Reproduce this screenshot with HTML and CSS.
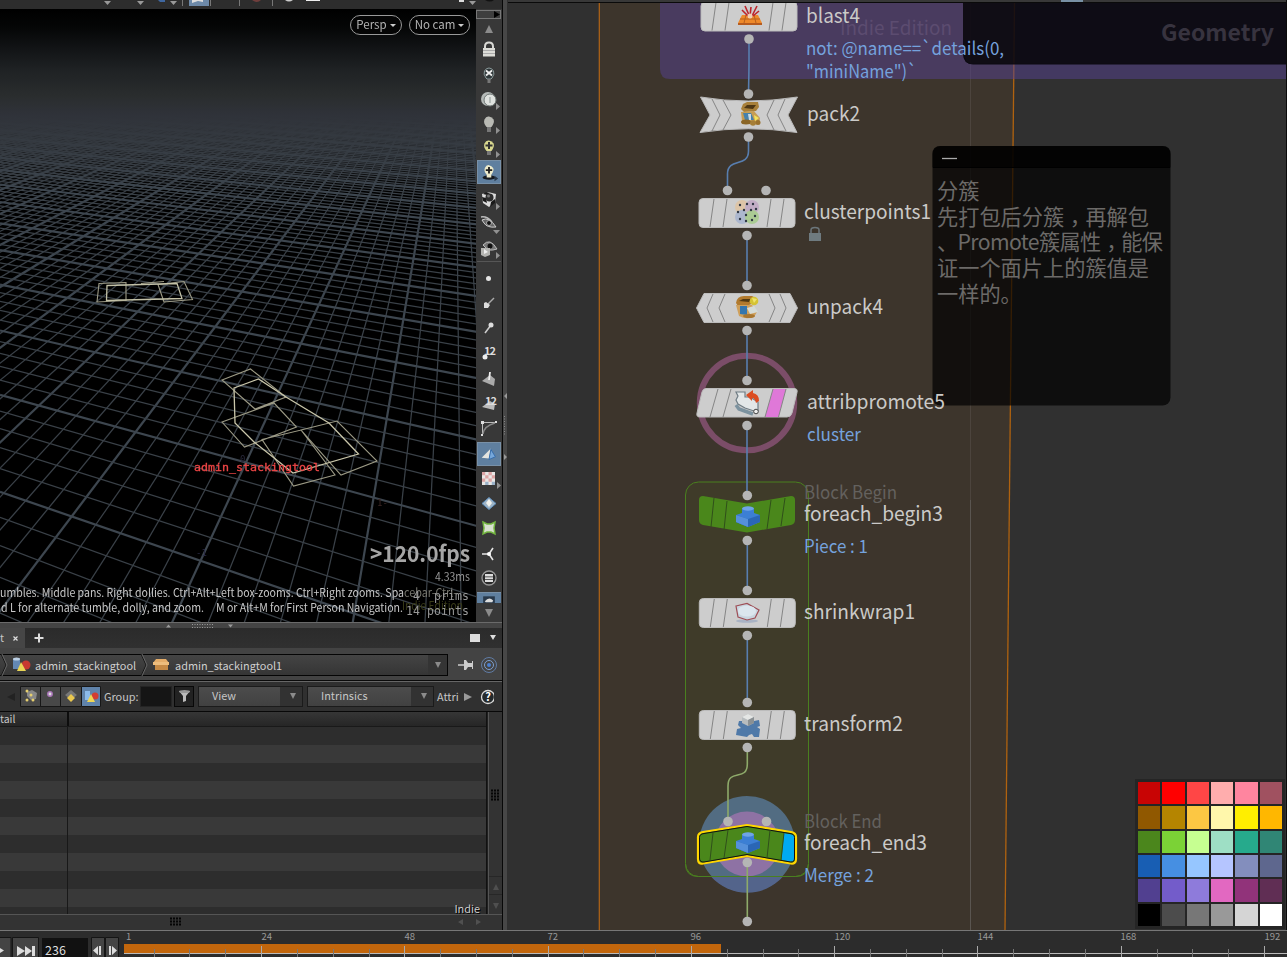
FILE: index.html
```html
<!DOCTYPE html>
<html lang="en">
<head>
<meta charset="utf-8">
<title>Geometry network</title>
<link rel="stylesheet" href="styles.css">
</head>
<body>
<div class="app">
<div class="workspace">
<div class="left">
  <div class="shelf"><svg width="502" height="9">
    <rect width="502" height="9" fill="#2d2d2d"/>
    <g fill="#999"><path d="M104 1h7l-3.500 4zM137 1h7l-3.500 4zM170 1h7l-3.500 4zM469 1h7l-3.500 4z"/></g>
    <path d="M101 0h2M158 0h7v2h-5z" fill="#3f67a0"/>
    <rect x="189" width="20" height="6" fill="#6d89a8"/><path d="M192 0v3l6-2 5 1v-2" fill="#ddd"/>
    <path d="M182.500 0v6M210.500 0v6M239.500 0v6M272.500 0v6" stroke="#777"/>
    <path d="M252 0h9q-4 4-9 0" fill="#703e3c"/><path d="M285 0h8q-4 3-8 0" fill="#ccc"/><rect x="306" width="14" height="1" fill="#eee"/><rect x="459" width="5" height="2" fill="#ddd"/><path d="M485 0h9q-4 3-9 0" fill="#111"/>
  </svg></div>
  <div class="view">
    <div class="scene">
      <canvas class="ground" id="ground" width="477" height="613"></canvas>
      <svg class="overlay" width="477" height="613" viewBox="0 9 477 613">
        <g fill="none" stroke="#9c9a85" stroke-width="1.100">
          <path d="M99 283.500L126 282.500 126 300.500 97 302zM158 284.500L184 281.500 192.500 299.500 164 302zM158 284.500l6 17.500M141 283.500l23-2"/>
          <path d="M107 285.500L177 283.500 182 298.500 106.500 300.500z" stroke="#c2c0a6" stroke-width="1.300"/>
          <path d="M222 380L250.500 369 286 397 255 409zM222 422L274 403 296.500 427 244.500 447zM262 439.500L301 430 335 475 293.500 486zM301 430L337 421 377 461 341 475z"/>
          <path d="M234 388L258.500 379 286 397 329 423 358.500 454 293 473 254 442 235 423z" stroke="#c9c6aa" stroke-width="1.300"/>
        </g>
        <g class="mono"><text x="194" y="471" fill="#ee4646" font-size="10.500" textLength="126" lengthAdjust="spacingAndGlyphs" stroke="#ee4646" stroke-width=".3">admin_stackingtool</text>
        <text x="240" y="462" fill="#29293c" font-size="9">0</text><text x="377" y="506" fill="#3b2724" font-size="9">1-</text><text x="196" y="556" fill="#292943" font-size="9">-1</text></g>
        <g fill="#c8c8c8" font-size="11.500">
          <text x="0" y="596.500" textLength="404" lengthAdjust="spacingAndGlyphs">umbles. Middle pans. Right dollies. Ctrl+Alt+Left box-zooms. Ctrl+Right zooms. Spa</text>
          <text x="404" y="596.500" fill="#77776f" textLength="53" lengthAdjust="spacingAndGlyphs">cebar-Ctrl-</text>
          <text x="1" y="611.500" textLength="203" lengthAdjust="spacingAndGlyphs">d L for alternate tumble, dolly, and zoom.</text>
          <text x="216" y="611.500" textLength="187" lengthAdjust="spacingAndGlyphs">M or Alt+M for First Person Navigation.</text>
          <text x="402" y="610" fill="#393b18" textLength="61" lengthAdjust="spacingAndGlyphs">Indie Edition</text>
        </g>
        <text x="370" y="562" font-size="22" font-weight="bold" fill="#a5a5a5" textLength="100" lengthAdjust="spacingAndGlyphs">&gt;120.0fps</text>
        <text x="435" y="581" font-size="11.500" fill="#969696" textLength="35" lengthAdjust="spacingAndGlyphs">4.33ms</text>
        <g class="mono" fill="#989898" font-size="11.500"><text x="413" y="600">4</text><text x="434" y="600" textLength="35">prims</text><text x="406" y="615" textLength="63" xml:space="preserve">14 points</text></g>
      </svg>
      <div class="cams"><span class="pill">Persp<i></i></span><span class="pill wide">No cam<i></i></span></div>
    </div>
    <div class="strip">
      <div class="grip"><svg width="26" height="9"><rect x=".5" y=".5" width="24" height="8" fill="#3e3e3e" stroke="#777"/><path d="M18 1l6 3.500L18 8z" fill="#000"/></svg></div>
      <svg class="arrow" viewBox="0 0 24 18"><path d="M8 13l4-8 4 8z" fill="#8b8b8b"/></svg>
      <svg class="tool" viewBox="0 0 24 24"><path d="M8 10V8.500q0-4 4-4t4 4V10" fill="none" stroke="#d9d9d5" stroke-width="2"/><path d="M6 10h12v8.500H6z" fill="#dcdcd7"/><path d="M6 12.500h12M6 15.500h12" stroke="#aaa"/></svg>
      <svg class="tool g1" viewBox="0 0 24 24"><path d="M9 15q-3-4-1.500-7T12 5t4.500 3-1.500 7l-1 1h-4z" fill="#30383a" stroke="#8b9a9a"/><path d="M9 7.500l6 5m0-5l-6 5" stroke="#eee" stroke-width="1.800"/><path d="M10.500 16h3v4h-3z" fill="#777"/></svg>
      <svg class="tool g1" viewBox="0 0 24 24"><circle cx="11" cy="11" r="7" fill="#b5bab8"/><circle cx="13" cy="12" r="6" fill="#dfe2df" stroke="#6f7775"/><path d="M12 9v6h2V9z" fill="#b5bcb9"/><path d="M19 15l4 3.500-4 3.500z" fill="#919191"/></svg>
      <svg class="tool" viewBox="0 0 24 24"><path d="M9.500 15q-3.500-4-2-7.500T12 4.500t4.500 3-2 7.500z" fill="#b9bab4"/><path d="M10 15h4v5h-4z" fill="#777"/><path d="M19 15l4 3.500-4 3.500z" fill="#919191"/></svg>
      <svg class="tool" viewBox="0 0 24 24"><path d="M9.500 15q-3.500-4-2-7.500T12 4.500t4.500 3-2 7.500z" fill="#d9d88f"/><path d="M8.500 9.500h7M12 6v7" stroke="#333" stroke-width="2"/><path d="M10 15h4v4h-4z" fill="#777"/><path d="M19 15l4 3.500-4 3.500z" fill="#919191"/></svg>
      <svg class="tool on" viewBox="0 0 24 24"><ellipse cx="12" cy="18" rx="7" ry="2.500" fill="#161a20"/><path d="M9.500 15q-3.500-4-2-7.500T12 4.500t4.500 3-2 7.500v3h-5z" fill="#eceacb"/><path d="M8.500 10h7M12 6.500v7" stroke="#222" stroke-width="2"/><path d="M18 16l4 3-4 3z" fill="#29384a"/></svg>
      <svg class="tool g4" viewBox="0 0 24 24"><path d="M5 6l6-2 8 2-1 8-6 5-6-4z" fill="#ddd"/><path d="M5 9l4 1 1 5-4-2zM14 14l4-3v4l-5 4zM9 4l4 1-3 2-4-1z" fill="#1a1a1a"/><circle cx="12.500" cy="9.500" r="4" fill="#2e2e2e"/><circle cx="11.500" cy="8" r="1.500" fill="#777"/><path d="M19 15l4 3.500-4 3.500z" fill="#919191"/></svg>
      <svg class="tool" viewBox="0 0 24 24"><path d="M5 8q7-4 14 7-9 1-12-4z" fill="#666" stroke="#ccc"/><circle cx="12" cy="11" r="2.500" fill="#111" stroke="#aaa"/><path d="M4 5q6-1 11 5" fill="none" stroke="#bbb" stroke-width="1.500"/><path d="M16 18h7l-3.500 4z" fill="#919191"/></svg>
      <svg class="tool g1" viewBox="0 0 24 24"><path d="M6 8q7-8 14 4-9 3-12-2z" fill="#777" stroke="#bbb"/><circle cx="13" cy="9" r="2.500" fill="#111"/><path d="M4 11h9v7l-5 2-4-2z" fill="#b4b4b1"/><path d="M7 12l4 3-4 2z" fill="#eee"/><path d="M19 15l4 3.500-4 3.500z" fill="#919191"/></svg>
      <div class="rule"></div>
      <svg class="tool g4" viewBox="0 0 24 24"><circle cx="11.500" cy="12.500" r="2.500" fill="#e5e5e5"/></svg>
      <svg class="tool g1" viewBox="0 0 24 24"><path d="M10 14l7-7" stroke="#aaa" stroke-width="1.500"/><path d="M7 12l2-1 4 3-2 3-4 0z" fill="#ddd"/></svg>
      <svg class="tool g1" viewBox="0 0 24 24"><path d="M8 17l6-8" stroke="#ccc" stroke-width="1.500"/><circle cx="14" cy="9" r="2.500" fill="#ddd"/></svg>
      <svg class="tool g1" viewBox="0 0 24 24"><circle cx="8" cy="16" r="2.500" fill="#eee"/><text x="7" y="14" font-size="11" font-weight="bold" fill="#ddd" textLength="12">12</text></svg>
      <svg class="tool g2" viewBox="0 0 24 24"><path d="M5 14l8-6 5 4-1 7z" fill="#aaa"/><path d="M12 13l1-8" stroke="#eee" stroke-width="1.800"/></svg>
      <svg class="tool" viewBox="0 0 24 24"><path d="M5 16l8-6 5 3-1 6z" fill="#bbb"/><text x="8" y="14" font-size="11" font-weight="bold" fill="#ddd" textLength="12">12</text></svg>
      <svg class="tool g1" viewBox="0 0 24 24"><path d="M5.500 19V6.500h13" fill="none" stroke="#bbb"/><path d="M6 18q1-8 12-11" fill="none" stroke="#888" stroke-width="1.500"/><path d="M4 5h3v3H4zM18 5h2v2h-2zM4 18h2v2H4z" fill="#ddd"/></svg>
      <svg class="tool on g2" viewBox="0 0 24 24"><path d="M4 16l10-10-2 11z" fill="#e4e4df"/><path d="M14 7l5 8-7 3z" fill="#76a7da" stroke="#326aaa"/></svg>
      <svg class="tool g1" viewBox="0 0 24 24"><path d="M5 5h13v13H5z" fill="#e8e7e5"/><path d="M5 5h3.200v3.200H5zM11.500 5h3.300v3.200h-3.300zM8.200 8.200h3.300v3.300H8.200zM14.800 8.200H18v3.300h-3.200zM5 11.500h3.200v3.300H5zM11.500 11.500h3.300v3.300h-3.300z" fill="#dda5a5"/><path d="M8.200 14.800h3.300V18H8.200zM14.800 14.800H18V18h-3.200z" fill="#9bb2c9"/><path d="M20 15l4 3.500-4 3.500z" fill="#919191"/></svg>
      <svg class="tool g1" viewBox="0 0 24 24"><path d="M12 5.500l7 6-7 6-7-6z" fill="#9eb4c6" stroke="#5d8ebe"/><path d="M9 11l3-4 3 4-3 4z" fill="#f1f1ec"/></svg>
      <svg class="tool" viewBox="0 0 24 24"><path d="M6 6l4 2h4l4-2-1 6 1 6-4-2h-4l-4 2 1-6z" fill="#d8e0d0" stroke="#73b540" stroke-width="1.500"/></svg>
      <svg class="tool g2" viewBox="0 0 24 24"><path d="M5 12h7l4-6M12 12l4 6" fill="none" stroke="#e5e5e5" stroke-width="1.600"/><circle cx="12" cy="12" r="2" fill="#fff"/></svg>
      <svg class="tool g1" viewBox="0 0 24 24"><circle cx="12" cy="11" r="7" fill="#292929" stroke="#999" stroke-width="1.300"/><path d="M8 7h8v2.500H8zM8 10.300h8v2H8zM8 13h8v2H8z" fill="#ddd"/></svg>
      <svg class="tool cut g1" viewBox="0 0 24 12"><rect x="5" y="4" width="14" height="8" fill="#28384a"/><path d="M7 10q5-6 10-1l-1 2H8z" fill="#ddd"/></svg>
      <svg class="arrow" viewBox="0 0 24 18"><path d="M8 6h8l-4 8z" fill="#8b8b8b"/></svg>
    </div>
  </div>
  <div class="split"><svg width="503" height="6"><path d="M166 4.500l2.500-3 2.500 3zM228 1.500h5l-2.500 3z" fill="#999"/><path d="M192 1.500h21M192 4.500h21" stroke="#999" stroke-dasharray="1 1.500"/></svg></div>
  <div class="tabs"><div class="tab">t<svg width="5" height="20"><path d="M.5 8.500l4 4m0-4l-4 4" stroke="#ddd" stroke-width="1.200"/></svg></div><svg class="plus" width="10" height="10"><path d="M5 .5v9M.5 5h9" stroke="#ddd" stroke-width="2"/></svg><svg class="tabmenu" width="27" height="10"><rect y="1" width="10" height="8" fill="#ddd"/><path d="M20 2h6l-3 5z" fill="#ddd"/></svg></div>
  <div class="pathbar">
    <div class="path">
      <svg width="33" height="22"><path d="M1 0l5 11-5 11" fill="none" stroke="#161616"/><path d="M2 0l5 11-5 11" fill="none" stroke="#666"/><path d="M13 5h7v10h-7z" fill="#6388b4"/><ellipse cx="16.500" cy="5" rx="3.500" ry="1.500" fill="#bcd0e5"/><circle cx="26" cy="11" r="4.500" fill="#c73930"/><path d="M21 8l5 9h-9z" fill="#e9d555"/></svg>
      <span class="crumb one">admin_stackingtool</span>
      <svg width="40" height="22"><path d="M6 0l5 11-5 11" fill="none" stroke="#161616"/><path d="M7 0l5 11-5 11" fill="none" stroke="#666"/><path d="M18 9l3-4h10l3 4z" fill="#e5ad69"/><path d="M20 9h13v7H20z" fill="#c58a46"/><path d="M18 8h16v3H18z" fill="#edbd7d"/></svg>
      <span class="crumb two">admin_stackingtool1</span>
      <span class="drop"></span>
    </div>
    <svg width="44" height="22"><path d="M0 11h7" stroke="#ccc" stroke-width="1.500"/><path d="M6 6h2l2 3h4V7h1v8h-1v-2h-4l-2 3H6z" fill="#ccc"/><circle cx="31" cy="11" r="7.500" fill="none" stroke="#607ca5"/><circle cx="31" cy="11" r="4.500" fill="none" stroke="#7fa0cf"/><circle cx="31" cy="11" r="2" fill="#4a7fd0"/></svg>
  </div>
  <div class="filters">
    <svg width="101" height="22"><path d="M15 7v8l-8-4z" fill="#222"/><g fill="#484848" stroke="#171717"><path d="M20.500.5h20v20h-20zM40.500.5h20v20h-20zM60.500.5h21v20h-21z"/><path d="M81.500.5h19v20h-19z" fill="#6083aa"/></g><path d="M27 6l5-2 5 3-1 6-5 1-4-4z" fill="#888"/><g fill="#e6cf6f"><circle cx="27" cy="5" r="1.500"/><circle cx="31" cy="9" r="1.500"/><circle cx="27" cy="14" r="1.500"/><circle cx="33" cy="14" r="1.500"/></g><circle cx="50" cy="8" r="2.200" fill="#ddd" stroke="#aa76b9" stroke-width="1.500"/><path d="M71 4l6 5-6 5-6-5z" fill="#777"/><path d="M71 8l4 4-4 4-4-4z" fill="#e9c74f"/><path d="M85 5h5v9h-5z" fill="#8cbbea"/><circle cx="95" cy="10" r="3.500" fill="#d33c31"/><path d="M91 8l4 8h-8z" fill="#efd655"/></svg>
    <span class="group">Group:</span><span class="field"></span>
    <svg class="funnel" width="20" height="22"><rect x=".5" y=".5" width="19" height="20" fill="#222" stroke="#080808"/><path d="M5 5h11l-4 5v5l-3 1v-6z" fill="#bbb"/><ellipse cx="10.500" cy="5.500" rx="5.500" ry="1.500" fill="#999"/></svg>
    <span class="combo a">View</span><span class="combo b">Intrinsics</span><span class="attri">Attri</span>
    <svg width="34" height="22"><path d="M4 7l8 4-8 4z" fill="#999"/><circle cx="28" cy="11" r="6.500" fill="#252a2c" stroke="#ddd" stroke-width="1.300"/><text x="25.300" y="15" font-size="11" font-weight="bold" fill="#fff">?</text></svg>
  </div>
  <div class="sheet"><div class="table"><div class="head">tail</div><div class="rows"><span>Indie</span></div></div><div class="vscroll"><svg width="14" height="200"><path d="M2 78.500h9M2 81.500h9M2 84.500h9M2 87.500h9" stroke="#050505" stroke-width="2" stroke-dasharray="2 1"/><path d="M0 164.500h14M0 182.500h14" stroke="#272727"/><path d="M4 178l3-6 3 6zM4 191h6l-3 6z" fill="#4f4f4f"/></svg></div></div>
  <div class="hscroll"><svg width="502" height="16"><path d="M170 3.500h12M170 6.500h12M170 9.500h12" stroke="#050505" stroke-width="2" stroke-dasharray="2 1"/><path d="M463 4v6l-5-3zM476 4v6l5-3z" fill="#505050"/></svg></div>
</div>
<div class="vsplit"><svg width="6" height="930"><path d="M4 393v6l-3-3zM1 454v6l3-3z" fill="#999"/><path d="M1.500 416v20M4.500 416v20" stroke="#888" stroke-dasharray="1 1.500"/></svg></div>
<div class="network">
<svg width="779" height="930" viewBox="508 0 779 930">
  <defs>
    <g id="plate"><rect x="-48" y="-14.500" width="96" height="29" rx="4" fill="#cdcdcd" stroke="#bcbcbc"/><path d="M-33-14l-4 28M-20-14l-4 28M24-14l-4 28M37-14l-4 28" stroke="#858585"/></g>
    <g id="brick"><path d="M-12-1l6-2v-4q6-4 12 0v4l6 2v7L0 11l-12-5z" fill="#3c7fd4"/><path d="M-12-1L0 3l12-4v7L0 11l-12-5z" fill="#2a66b5"/><path d="M-12-1L0 3v8l-12-5z" fill="#5590da"/><ellipse cy="-7.500" rx="6" ry="2.200" fill="#6fa4e6"/></g>
  </defs>
  <rect x="508" width="779" height="930" fill="#303030"/>
  <rect x="508" width="779" height="2" fill="#383838"/><path d="M508 2.500h779" stroke="#0a0a0a"/><rect x="1061" width="22" height="2" fill="#7890a4"/>
  <path d="M599.500 3H1014.500L1005 930H599.500z" fill="#3d352c"/>
  <path d="M599.300 3V930" stroke="#b36517" stroke-width="1.200"/><path d="M1014.500 3L1005 930" stroke="#b0620f" stroke-width="1.300"/>
  <path d="M970.500 3V500" stroke="#4c443d"/><path d="M970.500 500V930" stroke="#5a5550"/>
  <path d="M660 3H1287V79H670q-10 0-10-10z" fill="#554191" fill-opacity=".5"/>
  <text x="840" y="35" font-size="19" fill="#5c4c70" textLength="112" lengthAdjust="spacingAndGlyphs">Indie Edition</text>
  <rect x="685.500" y="482" width="123" height="394.500" rx="13" fill="#3f3b29" stroke="#4a801f"/>
  <path d="M963 3H1286V64H973q-10 0-10-10z" fill="#000" fill-opacity=".78"/><path d="M964 54q0 10 9 10h313" fill="none" stroke="#0c0a12"/>
  <text x="1161" y="41" font-size="23" font-weight="bold" fill="#37333f" textLength="113" lengthAdjust="spacingAndGlyphs">Geometry</text>
  <rect x="932.500" y="146" width="238" height="259.500" rx="8" fill="#000" fill-opacity=".7"/>
  <path d="M932.500 167.500V154q0-8 8-8h222q8 0 8 8v13.500z" fill="#000" fill-opacity=".72"/><path d="M933 167.500h237" stroke="#000"/><path d="M942 158.500h15" stroke="#aaa" stroke-width="1.300"/>
  <g fill="#6c6a68" font-size="21.200">
    <text x="937" y="199">分簇</text><text x="937" y="224.500" textLength="212">先打包后分簇<tspan class="comma" dy="6">，</tspan><tspan dy="-6">再解包</tspan></text><text x="937" y="249.500" textLength="226">、Promote簇属性<tspan class="comma" dy="6">，</tspan><tspan dy="-6">能保</tspan></text><text x="937" y="275.500" textLength="212">证一个面片上的簇值是</text><text x="937" y="301.500">一样的。</text>
  </g>
  <circle cx="747" cy="403" r="47.200" fill="none" stroke="#7b4d68" stroke-width="6"/>
  <circle cx="747" cy="844" r="48" fill="#526c82"/><path d="M711 876.500a48 48 0 0 0 72 0z" fill="#53648b"/><circle cx="747" cy="844" r="32.500" fill="#8e72a4"/>
  <path d="M685.500 864q0 12.500 13 12.500h97q13 0 13-12.500" fill="none" stroke="#4a801f"/>
  <g fill="none" stroke="#587eaf" stroke-width="1.600">
    <path d="M749 39V66L748.500 94M748.500 137V151C748.500 168 727.500 157 727.500 174V190M747 235V286M747 331V381M747 426V496M747.300 541V591M747.300 635V703"/>
    <path d="M747.300 748V764C747.300 782 728 768 728 786V822M747.300 864V922" stroke="#8eaa6a"/>
  </g>
  <use href="#plate" x="749" y="16.500"/><rect x="690" width="120" height="2" fill="#383838"/><path d="M690 2.500h120" stroke="#0a0a0a"/>
  <path d="M700.500 97Q748 105 797.500 97L788 115 797 132.500Q748 125 700 132.500L710 115z" fill="#cdcdcd" stroke="#b9b9b9"/>
  <path d="M712 99l8 16-8 16M723 100l8 15-8 15M785 99l-7 16 8 16M774 100l-7 15 7 15" fill="none" stroke="#858585"/>
  <use href="#plate" x="747" y="213"/>
  <path d="M704 293.500H790L797.500 308 790 322.500H704L696.500 308z" fill="#cdcdcd" stroke="#bcbcbc"/><path d="M713 294l-6 14 6 14M725 294l-6 14 6 14M769 294l6 14-6 14M780 294l6 14-6 14" fill="none" stroke="#858585"/>
  <path d="M706 388.500H794q4 0 3 4L792 413q-1 4-5 4H700q-4 0-3-4L702 392q1-3.500 4-3.500z" fill="#cdcdcd" stroke="#bcbcbc"/><path d="M773 389H786L778.500 417H765z" fill="#df78d8"/><path d="M718 389l-8 28M731 389l-8 28M773 389l-8 28M786 389l-7.500 28" stroke="#858585"/>
  <path d="M703 496L747 503.500 791 496q4 0 4 4V520q0 4-4 5L747 532.500 703 525q-4-1-4-5V500q0-4 4-4z" fill="#4a871b"/><path d="M714 498l-3 29M727 501l-3 29M771 500l-4 29M785 498l-4 28" stroke="#304f1b"/>
  <use href="#plate" x="747.300" y="613"/><use href="#plate" x="747.300" y="725"/>
  <path d="M703 832L747 825 791 832q5 1 5 5V859q0 5-5 4.500L747 856 703 863.500q-5 1-5-4.500V837q0-4 5-5z" fill="#4a871b" stroke="#ffd600" stroke-width="2.200"/><path d="M784 833l8 1.500q2.500.5 2.500 3V858q0 4-4 3.500l-9-1.500z" fill="#00aaf2"/><path d="M704 833.500L747 826.500 790 833.500q4.500.5 4.500 4V858q0 4.500-4 4L747 854.500 704 862q-4.500.5-4.500-4V837.500q0-3.500 4.500-4z" fill="none" stroke="#111"/><path d="M713 833l-3 27M728 830l-4 28M770 830l-3 28M784 833l-3 27" stroke="#304f1b"/>
  <g fill="#b5b5b5"><circle cx="749" cy="39" r="4.800"/><circle cx="748.500" cy="94" r="4.800"/><circle cx="748.500" cy="137" r="4.800"/><circle cx="727.500" cy="190.500" r="4.800"/><circle cx="766" cy="190.500" r="4.800"/><circle cx="747" cy="235.500" r="4.800"/><circle cx="747" cy="285.500" r="4.800"/><circle cx="747" cy="330.500" r="4.800"/><circle cx="747" cy="380.500" r="4.800"/><circle cx="747" cy="425.500" r="4.800"/><circle cx="747.300" cy="495.500" r="4.800"/><circle cx="747.300" cy="540.500" r="4.800"/><circle cx="747.300" cy="590.500" r="4.800"/><circle cx="747.300" cy="635.500" r="4.800"/><circle cx="747.300" cy="702.500" r="4.800"/><circle cx="747.300" cy="747.500" r="4.800"/><circle cx="728" cy="821.500" r="4.800"/><circle cx="766.500" cy="821.500" r="4.800"/><circle cx="747.300" cy="862.500" r="4.800"/><circle cx="747.300" cy="921.500" r="4.800"/></g>
  <!-- node glyphs -->
  <g transform="translate(750 16)"><path d="M-8-1H8L12 7H-12z" fill="#ee8a2c"/><path d="M-10 3h20M-4-1l-2 8M4-1l2 8" stroke="#b8601f"/><path d="M-12 7h24v2h-24z" fill="#b65c20"/><path d="M-5-10l4 9M1-9L0 0M7-10L2 0M-8-6l6 6M9-5L3 0" stroke="#bd242a" stroke-width="1.600"/><circle r="2.500" fill="#f0d0b5"/></g>
  <g transform="translate(750 114)"><path d="M-9-5l2-5 4-2H8l1 5-3 4-12 1z" fill="#a8803a"/><path d="M-6-6l3-3h9l-3 4z" fill="#4e3714"/><path d="M-9-2l13-1 6 7-1 6-7 1-10-4z" fill="#c69d53"/><path d="M-7-1h8l3 7-9 0z" fill="#4681ab"/><path d="M-2 0h3v6h-2z" fill="#c9dbe4"/><path d="M4 1l5 3-4 3z" fill="#f3e45b"/><ellipse cx="-4" cy="8" rx="5" ry="2.500" fill="#8a6526"/><circle cx="3" cy="9" r="2.800" fill="#a67f38"/><circle cx="8" cy="8.500" r="2.500" fill="#9a712d"/></g>
  <g transform="translate(747 212)"><circle cx="-5" cy="-5" r="7" fill="#ddc5a8"/><circle cx="5" cy="-5" r="7" fill="#c1adc5"/><circle cx="-5" cy="5" r="7" fill="#acb7ce"/><circle cx="5" cy="5" r="7" fill="#abcb94"/><g fill="#303744"><circle cx="-7" cy="-7" r="1.200"/><circle cy="-8" r="1.200"/><circle cx="6" cy="-8" r="1.200"/><circle cx="-3" cy="-2" r="1.200"/><circle cx="4" cy="-2" r="1.200"/><circle cx="9" cy="-3" r="1.200"/><circle cx="-9" r="1.200"/><circle cx="-7" cy="7" r="1.200"/><circle cx="-1" cy="3" r="1.200"/><circle cx="5" cy="8" r="1.200"/><circle cx="8" cy="4" r="1.200"/><circle cx="-1" cy="9" r="1.200"/></g></g>
  <g transform="translate(747 307)"><path d="M-11-4q1-7 8-7H5q5 2 4 6l-7 3-11 1z" fill="#b27a2d"/><path d="M-8-6l4-2h8L2-5z" fill="#503913"/><path d="M-11-2H5l5 7-3 5q-8 3-15-1z" fill="#cfa05b"/><path d="M-7-1h7v9l-7-1z" fill="#3476ad"/><path d="M0 1l7-2 4 6-8 2z" fill="#d5dcd8"/><circle cx="7" cy="-6" r="4.300" fill="#d5c333"/><path d="M5-9l5 1-3 4z" fill="#efe36d"/><ellipse cx="2" cy="9" rx="6" ry="2" fill="#a9762f"/></g>
  <g transform="translate(747 403)"><path d="M-11-11H-2v5h5l8 5v9H7l-9-3-7-4-2-4 2-4z" fill="#e3e7e8" stroke="#6f7c84" stroke-width="1.200"/><path d="M-11 2l3 4 14 5" fill="none" stroke="#7c929f" stroke-width="3.500"/><circle cx="9" cy="8.500" r="2.300" fill="#eee" stroke="#444"/><path d="M-1-8l7-5v3q6 1 6 8l-3 2q-1-5-4-5v3z" fill="#db4d22"/></g>
  <use href="#brick" x="748" y="516"/><use href="#brick" x="748" y="842"/>
  <g transform="translate(747 612)"><ellipse cy="9" rx="11" ry="1.800" fill="#a9b3c4"/><path d="M-11-6L0-8.500 12-2 8 6 0 8-9 5z" fill="#c8d5df" stroke="#9e4d55" stroke-width="1.200"/><ellipse cy="-1" rx="9" ry="5.500" fill="#dbe6ee"/></g>
  <g transform="translate(748 724)"><path d="M-9-3h5l2 3 3-2 10-2 1 6-3 1 3 2-1 8H6l-2-3-3 1-2 2-11-2 1-6 4-1-3-3z" fill="#4f79a8"/><path d="M-6-7l6-3 6 3v6L0 2l-6-3z" fill="#b7bcbe"/><path d="M-6-7l6-3 6 3-6 3z" fill="#e4e6e5"/><path d="M0-4l6-3v6L0 2z" fill="#8a9093"/></g>
  <g transform="translate(815 234)"><path d="M-4-1v-3q0-2.500 4-2.500T4-4v3" fill="none" stroke="#6c767b" stroke-width="1.500"/><path d="M-6-1H6v8H-6z" fill="#6f7b80"/></g>
  <g fill="#cbcac8" font-size="20.500">
    <text x="806" y="23" textLength="54" lengthAdjust="spacingAndGlyphs">blast4</text><text x="807" y="121" textLength="53" lengthAdjust="spacingAndGlyphs">pack2</text><text x="804" y="219" textLength="127" lengthAdjust="spacingAndGlyphs">clusterpoints1</text><text x="807" y="314" textLength="76" lengthAdjust="spacingAndGlyphs">unpack4</text><text x="807" y="409" textLength="138" lengthAdjust="spacingAndGlyphs">attribpromote5</text><text x="804" y="521" textLength="139" lengthAdjust="spacingAndGlyphs">foreach_begin3</text><text x="804" y="619" textLength="111" lengthAdjust="spacingAndGlyphs">shrinkwrap1</text><text x="804" y="731" textLength="99" lengthAdjust="spacingAndGlyphs">transform2</text><text x="804" y="850" textLength="123" lengthAdjust="spacingAndGlyphs">foreach_end3</text>
  </g>
  <g fill="#75a2dd" font-size="18">
    <text x="806" y="55" textLength="198" lengthAdjust="spacingAndGlyphs">not: @name==`details(0,</text><text x="806" y="78" textLength="111" lengthAdjust="spacingAndGlyphs">"miniName")`</text><text x="807" y="441" textLength="54" lengthAdjust="spacingAndGlyphs">cluster</text><text x="804" y="553" textLength="64" lengthAdjust="spacingAndGlyphs">Piece : 1</text><text x="804" y="882" textLength="70" lengthAdjust="spacingAndGlyphs">Merge : 2</text>
  </g>
  <g fill="#64615e" font-size="18"><text x="804" y="499" textLength="93" lengthAdjust="spacingAndGlyphs">Block Begin</text><text x="804" y="828" textLength="78" lengthAdjust="spacingAndGlyphs">Block End</text></g>
  <path d="M1286.500 0V930" stroke="#0a0a0a"/>
</svg>
<div class="palette" id="palette"></div>
</div>
</div>
<div class="timeline"><div class="transport">
  <svg width="124" height="27"><g fill="#444" stroke="#151515"><path d="M-2 7.500h13V28H-2zM12.500 7.500h26V28h-26zM91.500 7.500h13V28h-13zM105.500 7.500h13V28h-13z"/></g><rect x="42" y="8" width="46" height="20" fill="#111"/><path d="M-3 16l7 4.500-7 4.500zM17 16l8 5-8 5zM25 16l7 5-7 5zM32 16h3v10h-3zM98 16v9l-5-4.500zM99 16h2v9h-2zM109 16h2v9h-2zM112 16l5 4.500-5 4.500z" fill="#ddd"/><text x="45" y="25" font-size="12.500" fill="#ddd" textLength="21">236</text></svg></div>
  <svg class="ticks" id="ticks" width="1163" height="27" viewBox="124 930 1163 27"></svg>
</div>
</div>
<script src="main.js"></script>
</body>
</html>
```

FILE: styles.css
```css
* { box-sizing: border-box; }
body { margin: 0; background: #2d2d2d; overflow: hidden; font-family: "Noto Sans CJK SC", "Noto Sans", sans-serif; font-size: 12px; color: #c6c6c6; }
svg { display: block; flex: none; }
.app { width: 1287px; height: 957px; display: flex; flex-direction: column; }
.workspace { height: 930px; display: flex; }
.left { width: 503px; display: flex; flex-direction: column; border-right: 1px solid #080808; overflow: hidden; }
.shelf { height: 9px; }
.view { height: 613px; display: flex; }
.scene { position: relative; width: 476px; background: #000; overflow: hidden; }
.ground { display: block; }
.overlay { position: absolute; left: 0; top: 0; }
.mono { font-family: "DejaVu Sans Mono", monospace; }
.comma { font-family: "Noto Sans CJK TC", sans-serif; }
.cams { position: absolute; right: 6px; top: 6px; display: flex; gap: 7px; }
.pill { height: 20px; width: 52px; border: 1px solid #999; border-radius: 10px; background: #050505; font-size: 11.5px; line-height: 17px; padding-bottom: 2px; display: flex; align-items: center; justify-content: center; gap: 3px; color: #b4b4b4; white-space: nowrap; }
.pill.wide { width: 61px; }
.pill i { border: 3px solid transparent; border-top-color: #ccc; border-bottom: 0; margin-top: 2px; }
.strip { width: 26px; background: #383838; display: flex; flex-direction: column; align-items: center; overflow: hidden; }
.grip { height: 11px; padding-top: 1px; }
.arrow { width: 24px; height: 18px; }
.tool { width: 24px; height: 24px; }
.on { background: #5f7f9f; border: 1px solid #7890a7; }
.cut { height: 11px; background: #5f7f9f; border-top: 1px solid #7890a7; }
.g1 { margin-top: 1px; }
.g2 { margin-top: 2px; }
.g4 { margin-top: 4px; }
.rule { width: 24px; height: 1px; flex: none; background: #565656; }
.split { height: 6px; background: #444; border-top: 1px solid #6a6a6a; }
.tabs { height: 20px; background: linear-gradient(#2b2b2b, #303030); display: flex; align-items: center; }
.tab { width: 25px; height: 20px; background: #464646; font-size: 10.5px; line-height: 20px; display: flex; gap: 9px; }
.plus { margin-left: 9px; }
.tabmenu { margin-left: auto; margin-right: 5px; }
.pathbar { height: 33px; padding-top: 6px; background: #434343; display: flex; align-items: flex-start; gap: 10px; border-bottom: 1px solid #0a0a0a; }
.path { width: 448px; height: 22px; border: 1px solid #050505; border-left: 0; background: linear-gradient(#444, #353535); display: flex; align-items: center; }
.crumb { font-size: 10.9px; line-height: 20px; white-space: nowrap; color: #d0d0d0; margin-left: 2px; padding-bottom: 1px; }
.one { width: 100px; }
.two { width: 250px; margin-left: 0; }
.drop { margin-left: auto; width: 19px; height: 20px; background: #343434; display: flex; align-items: center; justify-content: center; }
.drop::after, .combo::after { content: ""; border: 3px solid transparent; border-top: 6px solid #8b8b8b; border-bottom: 0; }
.filters { height: 31px; padding-top: 4px; background: #303030; border-top: 1px solid #666; border-bottom: 1px solid #080808; display: flex; align-items: flex-start; }
.group { width: 35px; margin-left: 3px; font-size: 10.9px; line-height: 21px; white-space: nowrap; }
.field { width: 32px; height: 21px; background: #151515; border: 1px solid #242424; margin-left: 1px; }
.funnel { margin-left: 2px; }
.combo { height: 21px; border: 1px solid #1b1b1b; background: linear-gradient(90deg, transparent calc(100% - 22px), #323232 calc(100% - 22px)), linear-gradient(#4c4c4c, #414141); font-size: 10.9px; line-height: 17px; display: flex; align-items: center; justify-content: space-between; padding: 0 6px 2px 13px; }
.a { width: 105px; margin-left: 4px; }
.b { width: 127px; margin-left: 4px; }
.attri { width: 23px; margin-left: 3px; font-size: 10.9px; line-height: 21px; white-space: nowrap; }
.sheet { height: 202px; display: flex; gap: 1px; background: #202020; }
.table { width: 487px; display: flex; flex-direction: column; border-right: 1px solid #111; }
.head { height: 15px; background: linear-gradient(90deg, transparent 67px, #0d0d0d 67px, #0d0d0d 69px, transparent 69px), linear-gradient(#363636, #262626); border-bottom: 1px solid #191919; font-size: 10.5px; line-height: 13px; }
.rows { flex: 1; background: linear-gradient(90deg, transparent 67px, #181818 67px, #181818 68px, transparent 68px), repeating-linear-gradient(#2d2d2d 0 18px, #393939 18px 36px); display: flex; align-items: flex-end; justify-content: flex-end; }
.rows span { font-size: 10.9px; line-height: 12px; padding: 0 6px 0 0; color: #ccc; text-shadow: 1px 1px #000; }
.vscroll { width: 14px; background: #333; border-left: 1px solid #555; }
.hscroll { height: 16px; background: #333; border-top: 1px solid #555; }
.vsplit { width: 5px; background: #474747; overflow: hidden; border-right: 1px solid #303030; }
.network { position: relative; width: 779px; overflow: hidden; }
.palette { position: absolute; left: 627px; top: 779px; width: 150px; height: 150px; padding: 3px; background: #252525; display: grid; grid-template: repeat(6, 1fr) / repeat(6, 1fr); gap: 2px; }
.timeline { height: 27px; background: linear-gradient(#777 1px, #2c2c2c 1px); display: flex; }
.transport { width: 124px; overflow: hidden; }
```

FILE: main.js
```js
const swatches = ["#c80404", "#ff0000", "#ff4646", "#ffadad", "#ff859f", "#a05160", "#905800", "#b58500", "#fcc743", "#fff7ab", "#ffee00", "#ffb700", "#4b861c", "#7bd236", "#c6ff91", "#9edfc5", "#26aa8c", "#308675", "#185eb3", "#468fe2", "#96c6ff", "#b5c5ff", "#838ebd", "#5e678e", "#514090", "#735cca", "#8e7bdb", "#e268c1", "#91337a", "#602e54", "#000000", "#4c4c4c", "#777777", "#999999", "#d5d5d5", "#ffffff"];
document.getElementById("palette").innerHTML = swatches.map(c => `<div style="background:${c}"></div>`).join("");

// Perspective ground plane: two line families, each meeting at its vanishing point.
const ctx = document.getElementById("ground").getContext("2d");
ctx.translate(0, -9);
const horizon = 10;
function line(x1, y1, x2, y2, major) {
  ctx.lineWidth = major ? 2.2 : 1.25;
  ctx.strokeStyle = major ? "#3d464f" : "#3a4148";
  ctx.beginPath();
  ctx.moveTo(x1, y1);
  ctx.lineTo(x2, y2);
  ctx.stroke();
}
for (let i = -20; i < 160; i++) {
  const slope = 0.167 + i * 0.059;
  line(455 - slope * 50, horizon + 50, 455 - slope * 650, horizon + 650, i % 5 === 0);
}
for (let j = -20; j < 150; j++) {
  const w = 0.00245 + j * 0.000082;
  if (w < 0.0006) continue;
  const s = 1 / w / 1783;
  line(0, horizon + s * 1400, 477, horizon + s * 1877, j % 5 === 0);
}
const fog = ctx.createLinearGradient(0, 9, 0, 190);
[[0, "#000"], [0.1, "#050606"], [0.22, "#121416"], [0.34, "#1f2224"], [0.48, "#2a2d2e"], [0.58, "rgba(47,50,57,1)"], [0.72, "rgba(49,53,59,.7)"], [1, "rgba(49,53,59,0)"]].forEach(([t, c]) => fog.addColorStop(t, c));
ctx.fillStyle = fog;
ctx.fillRect(0, 9, 477, 181);

// Frame ruler: one mark every six frames, numbered every 24.
const px = 5.97, zero = 118.3;
let ruler = '<rect x="124" y="944" width="597" height="10" fill="#c2660c"/><path d="M124 953.500H1287" stroke="#bbb"/>';
for (let f = 6; f < 196; f += 6) {
  const x = Math.round(zero + f * px - 0.5) + 0.5, major = f % 24 === 0;
  ruler += `<path d="M${x} ${major ? 946 : 949}V957" stroke="${major ? "#aaa" : "#777"}"/>`;
}
for (const f of [1, 24, 48, 72, 96, 120, 144, 168, 192]) {
  ruler += `<text x="${f === 1 ? 126 : Math.round(zero + f * px) - 0.5}" y="940" font-size="9.500" fill="#999">${f}</text>`;
}
document.getElementById("ticks").innerHTML = ruler;
```
